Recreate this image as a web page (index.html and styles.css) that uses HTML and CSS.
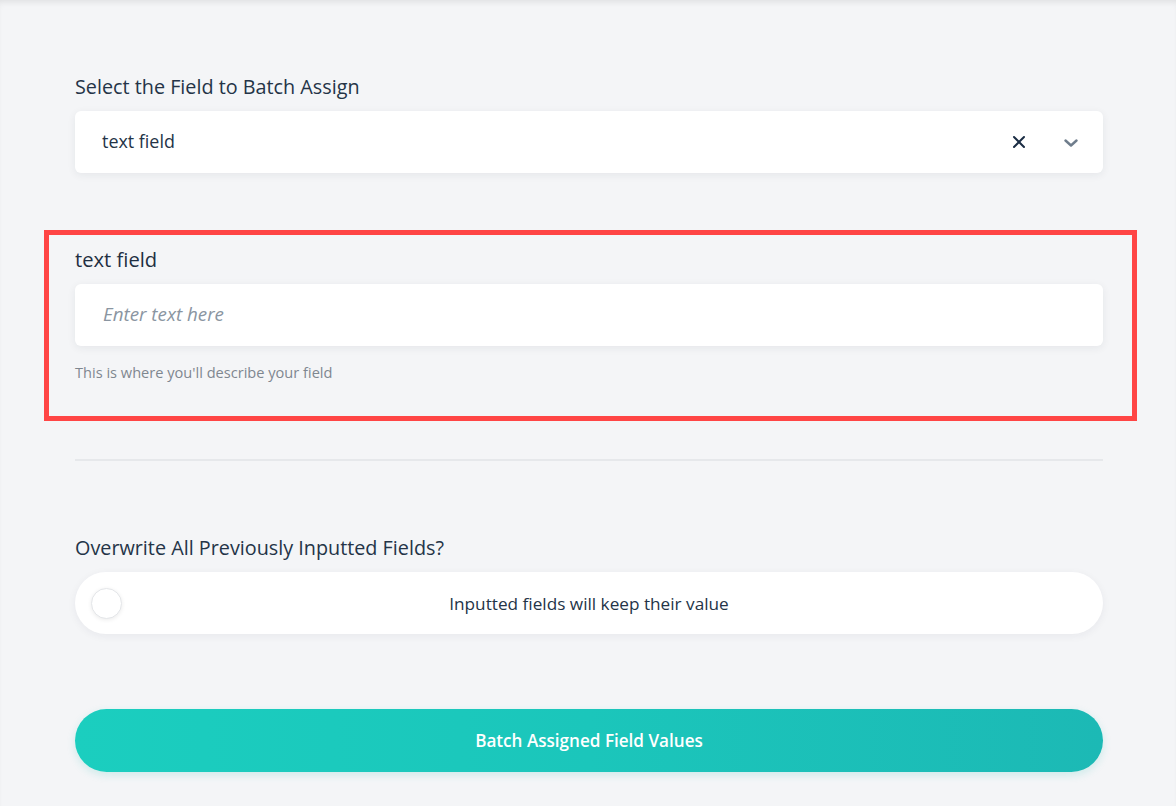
FILE: index.html
```html
<!DOCTYPE html>
<html lang="en">
<head>
<meta charset="utf-8">
<title>Batch Assign</title>
<link rel="stylesheet" href="styles.css">
</head>
<body>
<div class="page">
  <div class="content">
    <section class="field">
      <label class="field-label">Select the Field to Batch Assign</label>
      <div class="select">
        <span class="select-value">text field</span>
        <span class="select-icons">
          <svg class="icon-clear" width="14" height="14" viewBox="0 0 14 14"><path d="M2 2 L12 12 M12 2 L2 12" stroke="#1b2d44" stroke-width="2" fill="none" stroke-linecap="round"/></svg>
          <svg class="icon-chevron" width="14" height="9" viewBox="0 0 14 9"><path d="M1.5 1.5 L7 6.5 L12.5 1.5" stroke="#6f7d8c" stroke-width="2.4" fill="none" stroke-linecap="round" stroke-linejoin="round"/></svg>
        </span>
      </div>
    </section>

    <section class="highlight">
      <label class="field-label field-label-lg">text field</label>
      <div class="input"><span class="placeholder">Enter text here</span></div>
      <p class="help">This is where you'll describe your field</p>
    </section>

    <hr class="divider">

    <section class="field overwrite">
      <label class="field-label">Overwrite All Previously Inputted Fields?</label>
      <div class="toggle">
        <span class="knob"></span>
        <span class="toggle-text">Inputted fields will keep their value</span>
      </div>
    </section>

    <button class="submit">Batch Assigned Field Values</button>
  </div>
</div>
</body>
</html>
```

FILE: styles.css
```css
* { box-sizing: border-box; }
html, body { margin: 0; padding: 0; }
body {
  background: #f4f5f7;
  font-family: "Open Sans", "Noto Sans", sans-serif;
  color: #243447;
}
.page {
  min-height: 806px;
  box-shadow: inset 0 5px 6px -3px rgba(0, 0, 0, 0.09);
  padding-top: 75px;
}
.content {
  width: 1028px;
  margin-left: 75px;
}
.field-label {
  display: block;
  font-size: 19.8px;
  line-height: 24px;
  color: #243447;
  margin-bottom: 12px;
}
.select {
  height: 62px;
  background: #fff;
  border-radius: 6px;
  box-shadow: 0 2px 8px rgba(30, 40, 60, 0.07);
  display: flex;
  align-items: center;
  justify-content: space-between;
  padding: 0 25px 3px 27px;
}
.select-value {
  font-size: 17.9px;
  color: #243447;
}
.select-icons {
  display: flex;
  align-items: center;
  gap: 38px;
  margin-top: 3px;
}
.icon-clear { display: block; }
.icon-chevron { display: block; margin-top: 2px; }

.highlight {
  margin: 57px -34px 0 -31px;
  border: 5px solid #ff4545;
  padding: 12px 29px 34px 26px;
}
.field-label-lg {
  font-size: 20.2px;
  font-weight: 500;
  margin-bottom: 13px;
  color: #1f2f42;
}
.input {
  height: 62px;
  background: #fff;
  border-radius: 6px;
  box-shadow: 0 2px 8px rgba(30, 40, 60, 0.07);
  display: flex;
  align-items: center;
  padding: 0 0 2px 28px;
}
.placeholder {
  font-style: italic;
  font-size: 18.8px;
  color: #8a95a1;
}
.help {
  margin: 16px 0 0;
  font-size: 14.6px;
  line-height: 20px;
  color: #7f8790;
}
.divider {
  margin: 38px 0 0;
  border: 0;
  height: 2px;
  background: #e6e8eb;
}
.overwrite { margin-top: 75px; }
.toggle {
  height: 62px;
  background: #fff;
  border-radius: 31px;
  box-shadow: 0 2px 8px rgba(30, 40, 60, 0.06);
  display: flex;
  align-items: center;
  padding-left: 16px;
}
.knob {
  width: 31px;
  height: 31px;
  border-radius: 50%;
  background: #fff;
  border: 1px solid #e4e6e9;
  box-shadow: 0 1px 4px rgba(0, 0, 0, 0.08);
  flex: none;
}
.toggle-text {
  flex: 1;
  text-align: center;
  font-size: 17.2px;
  color: #243447;
  margin-right: 47px;
}
.submit {
  display: block;
  width: 100%;
  height: 63px;
  margin-top: 75px;
  border: 0;
  border-radius: 32px;
  background: linear-gradient(90deg, #1bcebf 0%, #1bc6bb 50%, #1cb9b5 100%);
  box-shadow: 0 3px 8px rgba(27, 190, 180, 0.18);
  color: #fff;
  font-family: "Open Sans", "Noto Sans", sans-serif;
  font-weight: 600;
  font-size: 17.1px;
  cursor: pointer;
}
```
